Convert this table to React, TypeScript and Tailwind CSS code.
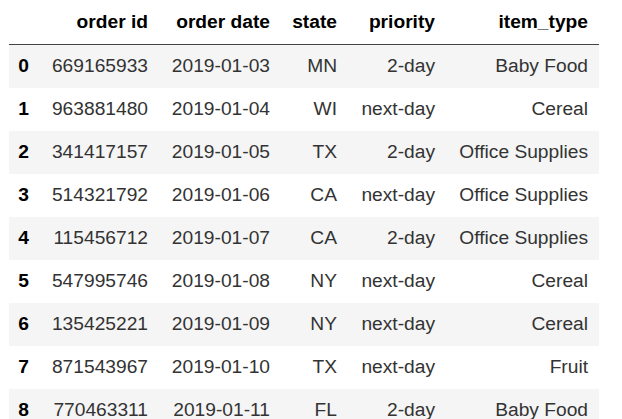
import React from "react";

const rows: [string, string, string, string, string, string][] = [
  ["0", "669165933", "2019-01-03", "MN", "2-day", "Baby Food"],
  ["1", "963881480", "2019-01-04", "WI", "next-day", "Cereal"],
  ["2", "341417157", "2019-01-05", "TX", "2-day", "Office Supplies"],
  ["3", "514321792", "2019-01-06", "CA", "next-day", "Office Supplies"],
  ["4", "115456712", "2019-01-07", "CA", "2-day", "Office Supplies"],
  ["5", "547995746", "2019-01-08", "NY", "next-day", "Cereal"],
  ["6", "135425221", "2019-01-09", "NY", "next-day", "Cereal"],
  ["7", "871543967", "2019-01-10", "TX", "next-day", "Fruit"],
  ["8", "770463311", "2019-01-11", "FL", "2-day", "Baby Food"],
];

const cols = "grid grid-cols-[31px_119px_122px_67px_98px_153px]";

export default function App() {
  return (
    <div
      className="w-[622px] h-[419px] overflow-hidden bg-white pl-[9px] text-[19.2px]"
      style={{ fontFamily: '"Liberation Sans", Arial, sans-serif' }}
    >
      <div className="w-[590px]">
        <div className={`${cols} h-[45px] items-center border-b border-[#444] font-bold text-black`}>
          <div />
          <div className="text-right pr-[11px]">order id</div>
          <div className="text-right pr-[11px]">order date</div>
          <div className="text-right pr-[11px]">state</div>
          <div className="text-right pr-[11px]">priority</div>
          <div className="text-right pr-[11px]">item_type</div>
        </div>
        {rows.map((r, i) => (
          <div
            key={r[0]}
            className={`${cols} h-[43px] items-center ${i % 2 === 0 ? "bg-[#f5f5f5]" : "bg-white"}`}
          >
            <div className="text-right pr-[11px] font-bold text-black">{r[0]}</div>
            {r.slice(1).map((c, j) => (
              <div key={j} className="text-right pr-[11px] text-[#333] whitespace-nowrap">
                {c}
              </div>
            ))}
          </div>
        ))}
      </div>
    </div>
  );
}
